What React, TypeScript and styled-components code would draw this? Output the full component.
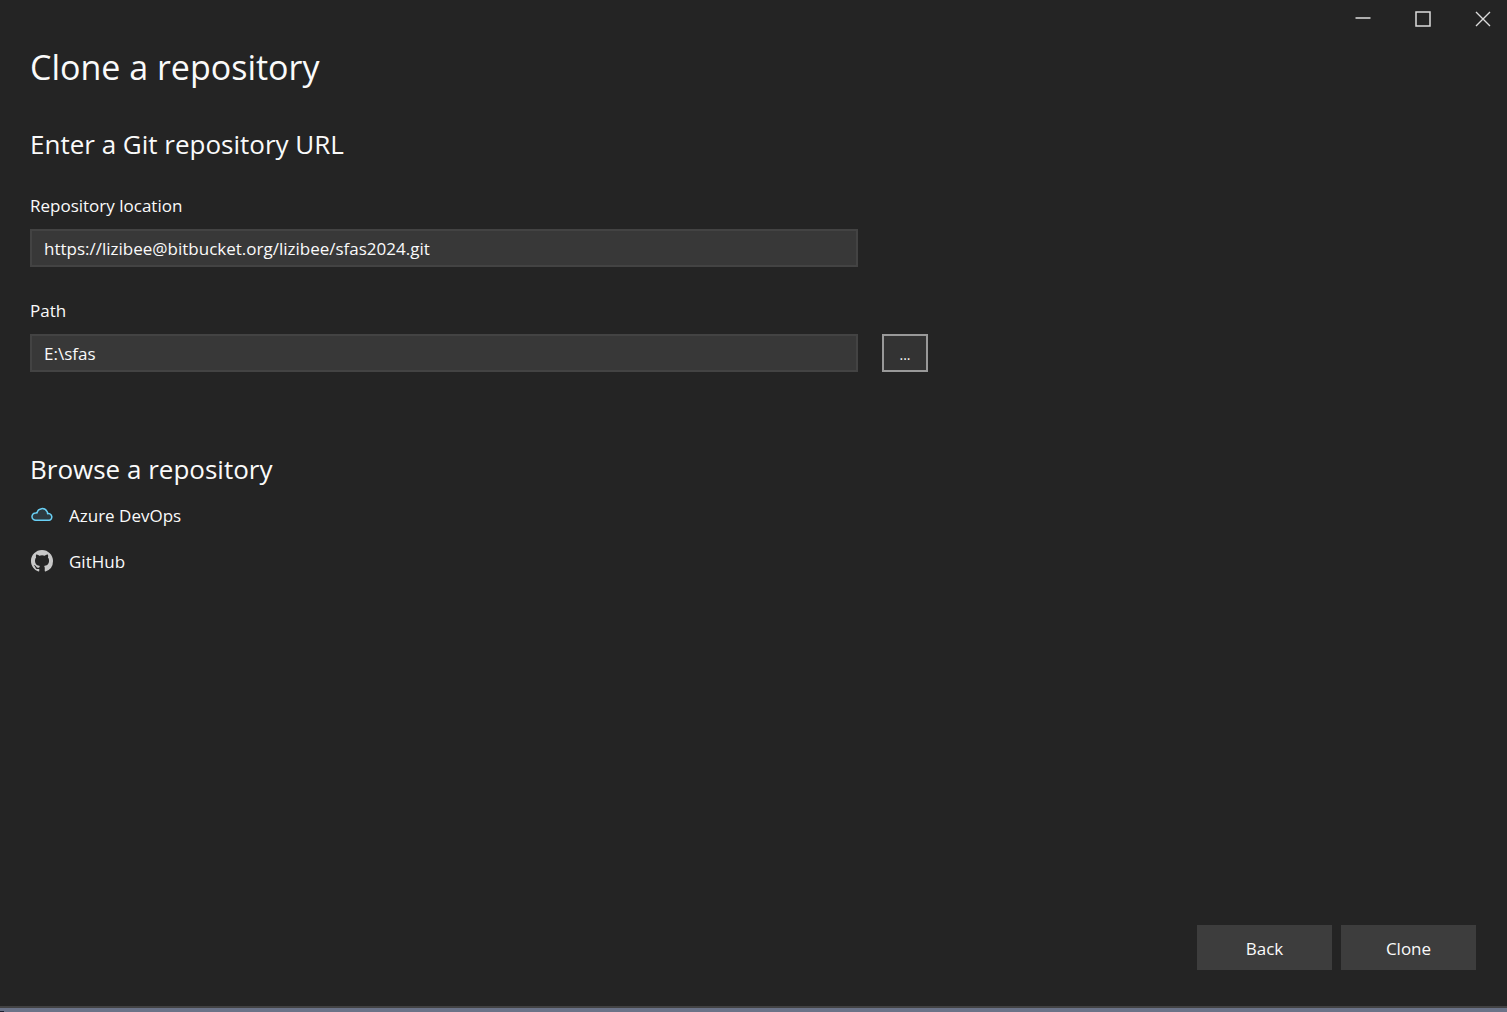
import React, { useState } from "react";
import styled, { createGlobalStyle } from "styled-components";

const GlobalStyle = createGlobalStyle`
  *, *::before, *::after { box-sizing: border-box; }
  body {
    margin: 0;
    background: #242424;
    color: #fafafa;
    font-family: "Segoe UI", "Open Sans", "Noto Sans", sans-serif;
    font-size: 17px;
    line-height: 24px;
  }
  button, input { font: inherit; color: inherit; }
`;

const Window = styled.div`
  display: flex;
  flex-direction: column;
  min-height: 100vh;
`;

const TitleBar = styled.header`
  display: flex;
  justify-content: flex-end;
  gap: 12px;
  height: 38px;
`;

const CaptionButton = styled.button`
  display: grid;
  place-items: center;
  width: 48px;
  height: 38px;
  padding: 0;
  border: 0;
  background: transparent;
  color: #dcdcdc;
`;

const Content = styled.main`
  flex: 1;
  display: flex;
  flex-direction: column;
  padding: 5px 30px 0;
`;

const Title = styled.h1`
  margin: 0;
  font-size: 34px;
  line-height: 48px;
  font-weight: 400;
`;

const Heading = styled.h2`
  margin: 0;
  font-size: 26px;
  line-height: 35px;
  font-weight: 400;
`;

const Form = styled.form`
  display: flex;
  flex-direction: column;
  gap: 32px;
  padding: 36px 0 80px;
`;

const Field = styled.div`
  display: grid;
  grid-template-columns: minmax(0, 828px) 46px;
  column-gap: 24px;
  row-gap: 11px;
`;

const Label = styled.label`
  grid-column: 1 / -1;
`;

const TextBox = styled.input`
  width: 100%;
  height: 38px;
  padding: 0 12px;
  border: 2px solid #434343;
  border-radius: 0;
  background: #383838;
  outline: none;
`;

const BrowseButton = styled.button`
  height: 38px;
  padding: 4px 0 0;
  border: 2px solid #999999;
  background: #333333;
  font-size: 14px;
`;

const Providers = styled.ul`
  display: flex;
  flex-direction: column;
  gap: 22px;
  margin: 0;
  padding: 17px 0 0;
  list-style: none;
`;

const ProviderButton = styled.button`
  display: flex;
  align-items: center;
  gap: 15px;
  padding: 0;
  border: 0;
  background: transparent;
`;

const Footer = styled.footer`
  display: flex;
  justify-content: flex-end;
  gap: 9px;
  padding: 0 31px 36px;
`;

const ActionButton = styled.button`
  width: 135px;
  height: 45px;
  padding: 2px 0 0;
  border: 0;
  background: #3d3d3d;
`;

const BottomEdge = styled.div`
  height: 6px;
  border-top: 2px solid #424243;
  background: linear-gradient(#1c2233, #1c2233) left bottom / 4px 1px no-repeat #6b7388;
`;

const CloudIcon = () => (
  <svg width="24" height="24" viewBox="0 0 24 24" aria-hidden="true">
    <path
      d="M5.8 16.3A3.7 3.7 0 0 1 5.6 8.9Q6.4 8.8 7 8.9A5.4 5.4 0 0 1 17.1 7.6Q17.6 8.6 17.6 9.7A3.3 3.3 0 1 1 19.2 16.3Z"
      fill="#2d3a40"
      stroke="#69d0f5"
      strokeWidth="1.5"
      strokeLinejoin="round"
    />
  </svg>
);

const GitHubIcon = () => (
  <svg width="24" height="24" viewBox="-0.7 0 17.4 17.4" aria-hidden="true">
    <path
      fill="#c8c8c8"
      d="M8 0C3.58 0 0 3.58 0 8c0 3.54 2.29 6.53 5.47 7.59.4.07.55-.17.55-.38 0-.19-.01-.82-.01-1.49-2.01.37-2.53-.49-2.69-.94-.09-.23-.48-.94-.82-1.13-.28-.15-.68-.52-.01-.53.63-.01 1.08.58 1.23.82.72 1.21 1.87.87 2.33.66.07-.52.28-.87.51-1.07-1.78-.2-3.64-.89-3.64-3.95 0-.87.31-1.59.82-2.15-.08-.2-.36-1.02.08-2.12 0 0 .67-.21 2.2.82a7.6 7.6 0 0 1 4 0c1.53-1.04 2.2-.82 2.2-.82.44 1.1.16 1.92.08 2.12.51.56.82 1.27.82 2.15 0 3.07-1.87 3.75-3.65 3.95.29.25.54.73.54 1.48 0 1.07-.01 1.93-.01 2.2 0 .21.15.46.55.38A8.01 8.01 0 0 0 16 8c0-4.42-3.58-8-8-8Z"
    />
  </svg>
);

export default function App() {
  const [url, setUrl] = useState("https://lizibee@bitbucket.org/lizibee/sfas2024.git");
  const [path, setPath] = useState("E:\\sfas");

  return (
    <>
      <GlobalStyle />
      <Window>
        <TitleBar>
          <CaptionButton aria-label="Minimize">
            <svg width="16" height="16" viewBox="0 0 16 16">
              <path d="M.5 7H15.5" stroke="currentColor" strokeWidth="1.5" />
            </svg>
          </CaptionButton>
          <CaptionButton aria-label="Maximize">
            <svg width="16" height="16" viewBox="0 0 16 16">
              <rect x="1" y="1" width="14" height="14" fill="none" stroke="currentColor" strokeWidth="1.5" />
            </svg>
          </CaptionButton>
          <CaptionButton aria-label="Close">
            <svg width="16" height="16" viewBox="0 0 16 16">
              <path d="M1 1 15 15M15 1 1 15" stroke="currentColor" strokeWidth="1.4" />
            </svg>
          </CaptionButton>
        </TitleBar>
        <Content>
          <Title>Clone a repository</Title>
          <Form id="clone-form" onSubmit={(e) => e.preventDefault()}>
            <Heading>Enter a Git repository URL</Heading>
            <Field>
              <Label htmlFor="location">Repository location</Label>
              <TextBox id="location" value={url} spellCheck={false} onChange={(e) => setUrl(e.target.value)} />
            </Field>
            <Field>
              <Label htmlFor="path">Path</Label>
              <TextBox id="path" value={path} spellCheck={false} onChange={(e) => setPath(e.target.value)} />
              <BrowseButton type="button">...</BrowseButton>
            </Field>
          </Form>
          <Heading>Browse a repository</Heading>
          <Providers>
            <li>
              <ProviderButton type="button">
                <CloudIcon />
                Azure DevOps
              </ProviderButton>
            </li>
            <li>
              <ProviderButton type="button">
                <GitHubIcon />
                GitHub
              </ProviderButton>
            </li>
          </Providers>
        </Content>
        <Footer>
          <ActionButton type="button">Back</ActionButton>
          <ActionButton type="submit" form="clone-form">Clone</ActionButton>
        </Footer>
        <BottomEdge />
      </Window>
    </>
  );
}
